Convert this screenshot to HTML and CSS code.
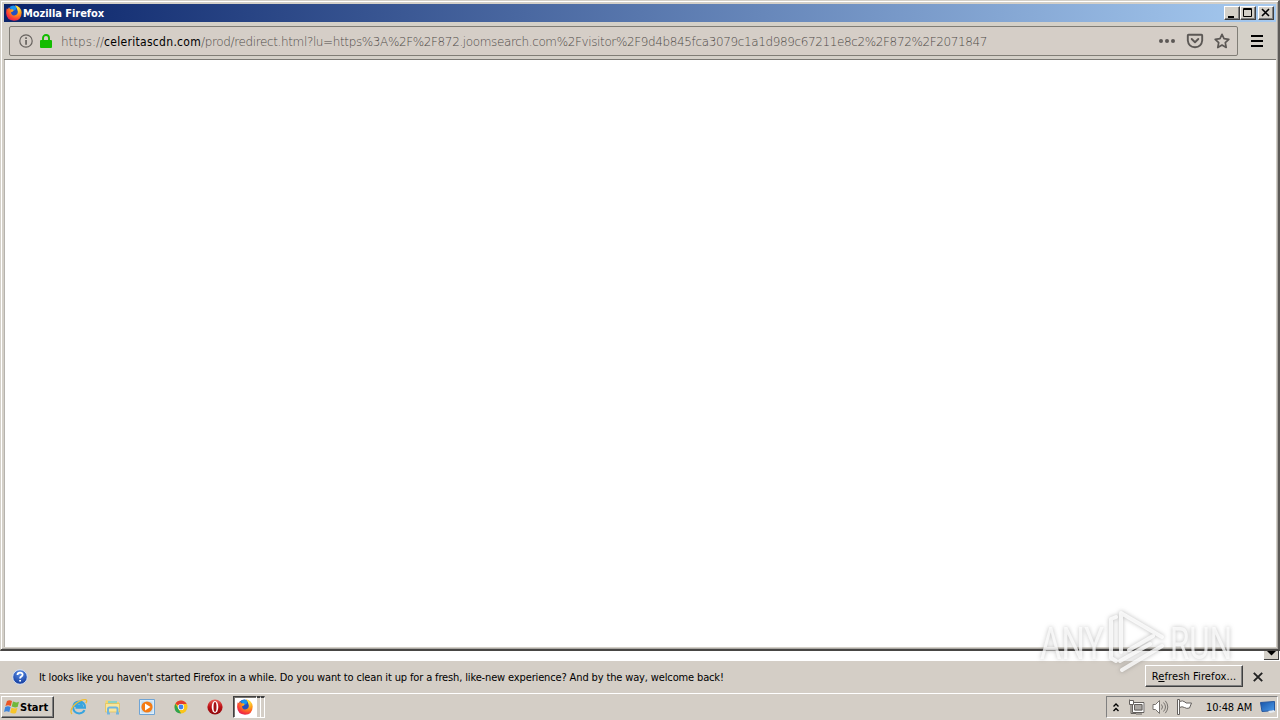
FILE: index.html
```
<!DOCTYPE html>
<html lang="en">
<head>
  <meta charset="UTF-8" />
  <title>Mozilla Firefox</title>
  <link rel="stylesheet" href="styles.css">
</head>
<body>
  <!-- Shared icon shapes -->
  <svg class="defs" width="0" height="0">
    <defs>
      <radialGradient id="foxFire" cx="70%" cy="20%" r="95%">
        <stop offset="0" stop-color="#fff04a" />
        <stop offset=".4" stop-color="#ff9b16" />
        <stop offset=".75" stop-color="#f83838" />
        <stop offset="1" stop-color="#d41268" />
      </radialGradient>
      <linearGradient id="desk" x1="0" y1="0" x2="1" y2="1">
        <stop offset="0" stop-color="#1654a8" />
        <stop offset="1" stop-color="#4d9bea" />
      </linearGradient>
      <radialGradient id="blueBall" cx="50%" cy="25%" r="75%">
        <stop offset="0" stop-color="#5d91e8" />
        <stop offset="1" stop-color="#123a9c" />
      </radialGradient>
      <linearGradient id="redBall" x1="0" y1="0" x2="0" y2="1">
        <stop offset="0" stop-color="#ee6058" />
        <stop offset=".5" stop-color="#bb1015" />
        <stop offset="1" stop-color="#8c080c" />
      </linearGradient>
      <symbol id="firefox" viewBox="0 0 16 16">
        <circle cx="7.500" cy="7" r="6.500" fill="#2350c0" />
        <path d="M4 2q4-2.500 7 .5l-2 3-4-1z" fill="#1695ee" />
        <path d="M.8 3.200 2 4.200 2.800 2.500l2 2q2-.5 3 .8L6.500 6.700l-1.500.6q.2 3.300 3.200 3.100Q12 10 11.800 6.600 11.600 3 8.800.3q6 .7 6.900 7.200Q15.500 15.500 8 15.800.5 15.300.1 8q0-3 .7-4.800z" fill="url(#foxFire)" />
      </symbol>
    </defs>
  </svg>

  <!-- Browser window -->
  <div class="window">
    <div class="titlebar">
      <svg class="title-icon" width="16" height="16"><use href="#firefox" /></svg>
      <span class="title">Mozilla Firefox</span>
      <div class="controls">
        <span class="ctl"><svg width="14" height="12"><path d="M3 9h6v2H3z" /></svg></span>
        <span class="ctl"><svg width="14" height="12"><path d="M2.500 1.500h8v8h-8zM2 2.500h9" fill="none" stroke="#000" /></svg></span>
        <span class="ctl close"><svg width="14" height="12"><path d="M3 2l7 7M10 2l-7 7" fill="none" stroke="#000" stroke-width="1.600" /></svg></span>
      </div>
    </div>

    <div class="toolbar">
      <div class="urlbar">
        <svg class="info" width="14" height="14" viewBox="0 0 14 14"><circle cx="7" cy="7" r="6.200" fill="none" stroke="#67635f" stroke-width="1.200" /><path d="M6.200 3.200h1.700v1.700H6.200zM6.200 6h1.700v4.800H6.200z" fill="#67635f" /></svg>
        <svg class="lock" width="12" height="14" viewBox="0 0 12 14"><path d="M3 7V4a3 3 0 0 1 6 0v3" fill="none" stroke="#12bc00" stroke-width="1.900" /><rect y="6" width="12" height="8" rx="1" fill="#12bc00" /></svg>
        <div class="url"><span class="scheme">https://</span><span class="host">celeritascdn.com</span><span class="path">/prod/redirect.html?lu=https%3A%2F%2F872.joomsearch.com%2Fvisitor%2F9d4b845fca3079c1a1d989c67211e8c2%2F872%2F2071847</span></div>
        <div class="page-actions">
          <svg width="18" height="16" viewBox="0 0 18 16" fill="#5c5855"><circle cx="3" cy="8" r="2" /><circle cx="9" cy="8" r="2" /><circle cx="15" cy="8" r="2" /></svg>
          <svg width="18" height="16" viewBox="0 0 18 16" fill="none" stroke="#5c5855" stroke-width="1.900" stroke-linecap="round" stroke-linejoin="round"><path d="M2.500 1.800h13q.7 0 .7.7V7.500Q15.500 14 9 14.200 2.500 14 1.800 7.500v-5q0-.7.7-.7zM5.700 6 9 9.200 12.300 6" /></svg>
          <svg width="16" height="16" viewBox="0 0 16 16" fill="none" stroke="#5c5855" stroke-width="1.700" stroke-linejoin="round"><path d="M8 1.300 10 5.700l4.800.6-3.500 3.300.9 4.900L8 12.100l-4.200 2.400.9-4.900L1.200 6.300 6 5.700z" /></svg>
        </div>
      </div>
      <svg class="burger" width="12" height="12"><path d="M0 1h12M0 6h12M0 11h12" stroke="#000" stroke-width="2" /></svg>
    </div>
    <div class="page"></div>
  </div>

  <div class="behind"><span class="scroll-down"><svg width="9" height="5"><path d="M0 0h9L4.500 4.500z" /></svg></span></div>

  <!-- Refresh prompt -->
  <div class="notice">
    <svg width="16" height="16" viewBox="0 0 16 16"><circle cx="8" cy="8" r="7.300" fill="url(#blueBall)" stroke="#d6e2f5" stroke-width="1" /><path d="M5.500 6.100q0-2.400 2.600-2.400t2.500 2.100Q10.600 7 9.200 7.600 8.100 8.100 8.100 9.500M8.100 11v1.500" fill="none" stroke="#fff" stroke-width="1.800" /></svg>
    <span class="notice-text">It looks like you haven't started Firefox in a while. Do you want to clean it up for a fresh, like-new experience? And by the way, welcome back!</span>
    <button class="refresh"><span>R<u>e</u>fresh Firefox...</span></button>
    <svg class="dismiss" width="10" height="10"><path d="M.8.8l8.400 8.400M9.200.8.8 9.200" stroke="#222" stroke-width="1.900" /></svg>
  </div>

  <!-- Taskbar -->
  <div class="taskbar">
    <button class="start">
      <svg width="16" height="16" viewBox="0 0 16 16"><path d="M3 2q2.500-1.500 5 0L6.800 7Q4 5.700 1.400 7z" fill="#ec5524" /><path d="M9 2.600q3 1.500 6 .2L13.600 8Q10.500 9 7.700 7.600z" fill="#70b83a" /><path d="M1.200 8q2.800-1.300 5.400 0L5.300 13Q2.500 11.500 0 13z" fill="#3d84dc" /><path d="M7.500 8.700q3 1.300 5.900.3L12 14q-3 1.200-5.800-.4z" fill="#f7c52a" /></svg>
      <span>Start</span>
    </button>
    <div class="launch">
      <svg width="18" height="18" viewBox="0 0 18 18"><path d="M14.500 12.200q-1.500 3.200-5.300 3.200-6-.3-6-6.200.4-5.500 6-5.700 5.800.2 5.800 6.300H5.500M5.700 8h6.500Q11.700 5.500 9 5.500T5.700 8z" fill="none" stroke="#36a4df" stroke-width="2" /><path d="M2 16Q-1 13 4.500 6.800 11.500.6 16 1.700q1.500.8-.2 3.500" fill="none" stroke="#eebd35" stroke-width="1.300" /></svg>
      <svg width="18" height="18" viewBox="0 0 18 18"><path d="M1.500 4V2.500H7L8 4h7v3H1.500z" fill="#f3d66c" /><path d="M4 3h9v3H4z" fill="#8ad2c5" /><path d="M1.500 5.500h14V14h-14z" fill="#f9e59a" stroke="#dfbd53" stroke-width=".7" /><path d="M4 16v-5q0-1.500 1.500-1.500h6.500q1.500 0 1.500 1.500v5M3 15.500h3M12 15.500h3" fill="none" stroke="#70b5df" stroke-width="2" /></svg>
      <svg width="18" height="18" viewBox="0 0 18 18"><path d="M1.500 1.500h15v15h-15z" fill="#dcecf9" stroke="#6fa4d5" /><path d="M3.500 3.500h11v11h-11z" fill="#b9d8ef" /><circle cx="9" cy="9" r="5.600" fill="#f57b13" /><path d="M7 5.500v7L12.500 9z" fill="#fff" /></svg>
      <svg width="18" height="18" viewBox="0 0 18 18"><circle cx="9" cy="9" r="6.500" fill="#fbc519" /><path d="M9 9 3.400 5.700Q5.200 2.500 9 2.500q3.800.1 5.700 3.500H9z" fill="#e33b2e" /><path d="M3.400 5.700 6.500 11 9 15.500Q2.500 15 2.500 9q0-1.700.9-3.300z" fill="#2fa350" /><circle cx="9" cy="9" r="3.100" fill="#fff" /><circle cx="9" cy="9" r="2.400" fill="#3f82ed" /></svg>
      <svg width="18" height="18" viewBox="0 0 18 18"><circle cx="9" cy="9" r="7.600" fill="url(#redBall)" /><ellipse cx="9" cy="9" rx="3.300" ry="6" fill="#fff" /><ellipse cx="9" cy="9" rx="1.500" ry="4.900" fill="#a51216" /></svg>
    </div>
    <div class="task"><div class="task-face"><svg width="16" height="16"><use href="#firefox" /></svg></div><i></i><i></i></div>
    <div class="tray">
      <svg class="chevrons" width="6" height="9"><path d="M.5 3.500 3 1l2.500 2.500M.5 8 3 5.500 5.500 8" fill="none" stroke="#000" stroke-width="1.400" /></svg>
      <svg width="17" height="16" viewBox="0 0 17 16"><path d="M5.500 4.500h10v8h-10z" fill="#aaa6a2" stroke="#fff" stroke-width="2" /><path d="M4.500 3.500h11.500v10H4.500zM6.500 5.500h7.500v5.500H6.500zM8 15h6" fill="none" stroke="#65615e" /><path d="M1.500.5v4h1.500v10h5" fill="none" stroke="#65615e" /><path d="M1.500 1.500h4v4h-4z" fill="#fff" stroke="#65615e" /></svg>
      <svg width="17" height="16" viewBox="0 0 17 16" fill="none" stroke="#77736f"><path d="M1 5.500h2.500L7.500 1.500v13l-4-4H1z" fill="#fff" /><path d="M9.500 5.500q2 2.500 0 5M11.500 3.500q4 4.500 0 9M13.300 1.800q5 6.200 0 12.400" /></svg>
      <svg width="17" height="16" viewBox="0 0 17 16"><path d="M1.500.5h2v15h-2z" fill="#fff" stroke="#65615e" /><path d="M3.500 2.500q3-1.500 5.500.5l1 1h5.500L13.500 9q-3 1-5-.5-2.500-1.500-5 0z" fill="#fff" stroke="#65615e" /></svg>
      <span class="clock">10:48 AM</span>
      <svg class="show-desk" width="16" height="14" viewBox="0 0 16 14"><path d="M.5 2.500 14.500 1.500v9L2 11.500z" fill="url(#desk)" stroke="#2457a0" /><path d="M8 11l6-1 1 2-5 1z" fill="#e6edf5" /></svg>
    </div>
  </div>

  <!-- Watermark over the corner of the window -->
  <svg class="watermark" width="230" height="74" viewBox="0 0 230 74">
    <g class="mark-text">
      <text x="4" y="54" textLength="64" lengthAdjust="spacingAndGlyphs">ANY</text>
      <text x="134" y="54" textLength="62" lengthAdjust="spacingAndGlyphs">RUN</text>
    </g>
    <path class="mark-edge" d="M80 12l-5 2v39l5 3M85 47V8l41 24M93 45l24-14M86 65l40-24M84 56l30-17" />
  </svg>
</body>
</html>
```
FILE: styles.css
```
* { box-sizing: border-box; }
body {
  margin: 0;
  width: 1280px;
  height: 720px;
  overflow: hidden;
  background: #fff;
  color: #000;
  font-family: 'DejaVu Sans Condensed', 'DejaVu Sans', sans-serif;
  font-size: 11px;
  display: flex;
  flex-direction: column;
}
svg { display: block; flex: none; }
button { font-family: inherit; font-size: 11px; color: #000; }
.defs { position: absolute; }

/* Window */
.window {
  height: 651px;
  padding: 2px 1px 1px 2px;
  background: #d4d0c8;
  border: 1px solid #d4d0c8;
  border-right: 2px solid #5c5a57;
  border-bottom: 2px solid #484644;
  box-shadow: inset 1px 1px #fff, inset -1px -1px #aaa7a2;
  display: flex;
  flex-direction: column;
}
.titlebar {
  height: 18px;
  margin: 1px 1px 0;
  padding: 0 2px;
  display: flex;
  align-items: center;
  background: linear-gradient(to right, #0a246a, #a6caf0);
}
.title {
  margin-left: 1px;
  color: #fff;
  font-weight: bold;
  letter-spacing: -0.05px;
}
.controls { display: flex; margin-left: auto; }
.ctl {
  width: 16px;
  height: 14px;
  background: #d4d0c8;
  border: 1px solid;
  border-color: #fff #404040 #404040 #fff;
  box-shadow: inset -1px -1px #808080;
}
.close { margin-left: 2px; }
.toolbar {
  height: 38px;
  margin: 0 1px;
  padding: 4px 13px 3px 5px;
  display: flex;
  align-items: center;
  justify-content: space-between;
  border-bottom: 1px solid #7b7974;
}
.urlbar {
  width: 1229px;
  height: 30px;
  padding: 0 7px 0 9px;
  display: flex;
  align-items: center;
  background: #d5cec7;
  border: 1px solid #807d76;
  border-radius: 2px;
}
.lock { margin-left: 7px; }
.url {
  flex: 1;
  margin-left: 9px;
  padding-top: 1px;
  display: flex;
  white-space: nowrap;
  font-size: 12px;
  color: #4f4b48;
}
.scheme, .path { font-family: 'DejaVu Sans', sans-serif; font-weight: 200; }
.host { color: #000; letter-spacing: 0.3px; }
.path { letter-spacing: -0.37px; }
.page-actions { display: flex; gap: 10px; }
.page { flex: 1; margin: 0 1px 1px; background: #fff; border-left: 1px solid #b5b2ad; }

.behind { height: 10px; display: flex; justify-content: flex-end; }
.scroll-down {
  width: 15px;
  height: 9px;
  margin-right: 1px;
  padding-left: 3px;
  background: #d4d0c8;
  border: 1px solid #404040;
  border-width: 0 1px 1px 0;
}

/* Notification */
.notice {
  height: 32px;
  padding: 0 17px 0 12px;
  display: flex;
  align-items: center;
  background: #d4cec6;
}
.notice-text { margin-left: 11px; white-space: nowrap; letter-spacing: -0.14px; }
.refresh {
  width: 98px;
  height: 22px;
  margin-left: auto;
  margin-bottom: 2px;
  padding: 0;
  background: #d4cec6;
  border: 1px solid;
  border-color: #fff #404040 #404040 #fff;
  box-shadow: inset -1px -1px #808080;
  letter-spacing: 0.1px;
}
.dismiss { margin-left: 10px; }

/* Taskbar */
.taskbar {
  height: 27px;
  padding: 2px 2px 2px 1px;
  display: flex;
  background: #d4cec6;
  border-top: 1px solid #fff;
}
.start {
  width: 53px;
  height: 22px;
  padding: 0 2px;
  display: flex;
  align-items: center;
  background: #d4cec6;
  border: 1px solid;
  border-color: #fff #404040 #404040 #fff;
  box-shadow: inset -1px -1px #808080;
  font-weight: bold;
}
.launch { display: flex; align-items: center; gap: 16px; margin-left: 16px; }
.task { display: flex; height: 22px; margin-left: 9px; }
.task-face {
  width: 24px;
  padding: 2px 2px 2px 3px;
  background: #fff;
  border: 1px solid;
  border-color: #404040 #fff #fff #404040;
  box-shadow: inset 1px 1px #77746f;
}
.task i { width: 4px; border-top: 2px solid #404040; border-right: 1px solid #fff; border-bottom: 1px solid #fff; }
.tray {
  width: 172px;
  height: 22px;
  margin-left: auto;
  padding: 0 1px 0 6px;
  display: flex;
  align-items: center;
  gap: 7px;
  border: 1px solid;
  border-color: #808080 #fff #fff #808080;
}
.chevrons { margin-right: 2px; }
.clock { margin-left: 6px; white-space: nowrap; letter-spacing: -0.1px; }
.show-desk { margin-left: auto; }

/* Watermark */
.watermark {
  position: absolute;
  left: 1036px;
  top: 605px;
  overflow: visible;
  filter: drop-shadow(0 0 2px rgba(90, 90, 90, .5));
}
.mark-text {
  font: 45px 'Roboto', sans-serif;
  fill: rgba(255, 255, 255, .75);
}
.mark-edge {
  fill: none;
  stroke: rgba(255, 255, 255, .8);
  stroke-width: 4;
  stroke-linecap: round;
  stroke-linejoin: round;
}
```
